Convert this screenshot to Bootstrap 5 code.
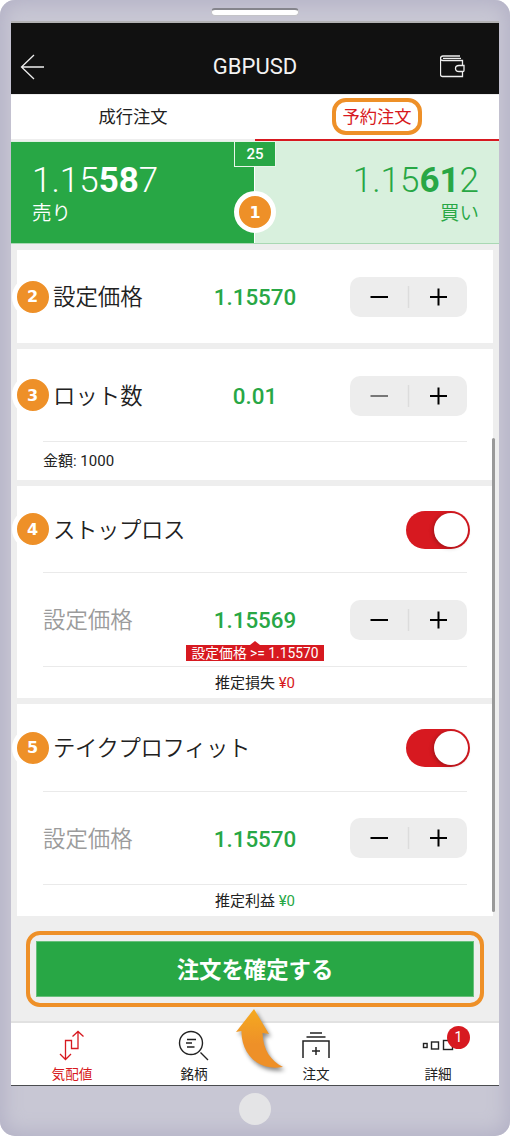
<!DOCTYPE html>
<html lang="ja">
<head>
<meta charset="utf-8">
<meta name="viewport" content="width=device-width, initial-scale=1">
<title>GBPUSD 予約注文</title>
<link href="https://cdn.jsdelivr.net/npm/bootstrap@5.3.0/dist/css/bootstrap.min.css" rel="stylesheet">
<style>
:root{--green:#28a745;--red:#d71920;--orange:#ee9028}
body{font-family:Roboto,"Noto Sans CJK JP",sans-serif;color:#212121;width:510px;height:1136px;overflow:hidden;background:#fff}
.phone{width:510px;height:1136px;border-radius:15px;background:#c8c7d4;box-shadow:inset 0 0 20px 3px #b2b0c5;padding:8px 11px 0}
.speaker{width:88px;height:8px;border-radius:4px;background:#fff;border:1px solid #c4c4c8;border-top:2px solid #85858c;margin-bottom:5px}
.screen{height:1065px;background:#eee;border-top:2px solid #b3b2b4;border-bottom:1px solid #4a4c4f}
.topbar{height:71px;background:#111;color:#f3f3f3;padding:15px 33px 0 9px;font-size:22px}
.tabs{height:47px;background:#fff;font-size:17.3px;border-top:1px solid #eee}
.tab-item{border-bottom:2px solid #eee;height:46px;padding-top:2px}
.tab-item.on{border-color:var(--red);color:var(--red)}
.ringed{border:4px solid var(--orange);border-radius:14px;width:90px;height:37px;margin-top:-3px;padding-top:3px}
.quotes{height:103px;border-top:1px solid #dff2e3;border-bottom:1px solid #a9d8b3}
.sell{background:var(--green);color:#fff;padding:20px 21px 0;border-right:1px solid #fff;width:244px}
.buy{background:#d8f0dd;color:var(--green);padding:20px 20px 0}
.price{font-size:35px;font-weight:300;line-height:38px}
.price b{font-weight:700}
.side{font-size:19.5px;line-height:26px;font-weight:350;padding-top:1px}
.spread{left:223px;top:-1px;width:42px;height:26px;background:var(--green);color:#fff;border:1px solid #e8f6ea;font-size:15px;font-weight:500}
.num{width:42px;height:42px;border-radius:50%;background:var(--orange);border:5px solid #fff;color:#fff;font:bold 16px "DejaVu Sans","Noto Sans",sans-serif}
.num.side-num{left:-5.5px;top:50%;margin-top:-21px}
.num.mid{left:223px;top:49px}
.panels{padding:6px 6px 0}
.panel{background:#fff;padding:0 26px;margin-bottom:6px}
.line{display:grid;grid-template-columns:1fr auto 1fr;align-items:center;position:relative;margin:0 -26px;padding:0 26px}
.name{font-size:22.4px;line-height:30px;white-space:nowrap;margin-top:1px;font-weight:350}
.name.in{padding-left:10px}
.name.kana{letter-spacing:-.4px}
.name.dim{color:#9b9b9b}
.val{font-size:22.4px;font-weight:500;color:var(--green);line-height:30px;padding-top:1px}
.stepper{width:117px;height:40px;border-radius:10px;background:#ededed;justify-self:end}
.rule{height:1px;background:#eaeaea}
.foot{font-size:15px;padding-top:1px}
.toggle{width:64px;height:38px;border-radius:19px;background:var(--red);padding:2px;justify-self:end;margin-right:-3px;margin-top:1px}
.knob{width:34px;height:34px;border-radius:50%;background:#fff;box-shadow:-1px 1px 4px #0004}
.tip{left:169px;top:72px;width:138px;height:16px;background:var(--red);color:#fff;font-size:13.8px;line-height:16px}
.tip::before{content:"";position:absolute;left:64px;top:-4px;border:5px solid transparent;border-top:0;border-bottom:4px solid var(--red)}
.scroll-thumb{right:4px;top:194px;width:3px;height:474px;border-radius:2px;background:#999}
.cta{margin:15px 15px 0;height:76px;border:4px solid var(--orange);border-radius:14px;padding:6px}
.cta .btn{background:var(--green);border:1px solid #68bf7b;color:#fff;font-size:22.4px;font-weight:700}
.dock{height:64px;background:#fff;border-top:2px solid #e1e1e1;margin-top:14px;font-size:13.6px}
.dock>div{width:122px;padding-top:5px}
.dock svg{display:block;height:36px;width:50px}
.dock span{line-height:20px}
.alert-dot{left:70px;top:3px;width:23px;height:23px;border-radius:50%;background:var(--red);color:#fff;font-size:14px}
.pointer{left:229px;top:1003px;filter:drop-shadow(2px 3px 2px #0007)}
.home{width:32px;height:32px;border-radius:50%;background:#e4e4e6;margin-top:7px}
</style>
</head>
<body>
<div class="phone position-relative">
  <div class="speaker mx-auto"></div>
  <div class="screen position-relative">
    <header class="topbar position-relative d-flex align-items-center justify-content-between">
      <svg width="26" height="28" viewBox="0 -1 26 28" fill="none" stroke="#eee" stroke-width="1.3"><path d="M24 14H1.500M14 2L1.500 14L14 26"/></svg>
      <div class="position-absolute start-0 end-0 text-center">GBPUSD</div>
      <svg width="26" height="24" viewBox="1 0 26 24" fill="none" stroke="#eee" stroke-width="1.300"><path d="M21 2H4Q1.500 2 1.500 4.500V20.500Q1.500 22.500 3.500 22.500H23.500V18M23.500 11V6.500H4Q1.500 6.500 1.500 4.500M4 4.300H22M25 11.500H20Q16.500 11.500 16.500 14.500T20 17.500H24Q25 17.500 25 16.500Z"/></svg>
    </header>
    <div class="tabs d-flex">
      <div class="tab-item w-50 d-flex align-items-center justify-content-center">成行注文</div>
      <div class="tab-item on w-50 d-flex align-items-center justify-content-center"><div class="ringed d-flex align-items-center justify-content-center">予約注文</div></div>
    </div>
    <div class="quotes position-relative d-flex">
      <div class="sell"><div class="price">1.15<b>58</b>7</div><div class="side">売り</div></div>
      <div class="buy flex-fill text-end"><div class="price">1.15<b>61</b>2</div><div class="side">買い</div></div>
      <div class="spread position-absolute d-flex align-items-center justify-content-center">25</div>
      <div class="num mid position-absolute d-flex align-items-center justify-content-center">1</div>
    </div>
    <main class="panels position-relative">
      <section class="panel">
        <div class="line" style="height:93px"><div class="num side-num position-absolute d-flex align-items-center justify-content-center">2</div><div class="name in">設定価格</div><div class="val">1.15570</div><div class="stepper"><svg width="117" height="40" stroke="#000" stroke-width="2"><path d="M20.500 20H38M80 20H97M88.500 11.500V28.500"/><path d="M58.500 9V31" stroke="#dcdcdc" stroke-width="1.500"/></svg></div></div>
      </section>
      <section class="panel">
        <div class="line" style="height:92px"><div class="num side-num position-absolute d-flex align-items-center justify-content-center">3</div><div class="name in">ロット数</div><div class="val">0.01</div><div class="stepper" style="margin-top:2px"><svg width="117" height="40" stroke="#000" stroke-width="2"><path d="M20.500 20H38" stroke="#777"/><path d="M80 20H97M88.500 11.500V28.500"/><path d="M58.500 9V31" stroke="#dcdcdc" stroke-width="1.500"/></svg></div></div>
        <div class="rule"></div>
        <div class="foot d-flex align-items-center" style="height:38px">金額: 1000</div>
      </section>
      <section class="panel">
        <div class="line" style="height:86px"><div class="num side-num position-absolute d-flex align-items-center justify-content-center">4</div><div class="name in kana">ストップロス</div><div></div><div class="toggle d-flex justify-content-end"><div class="knob"></div></div></div>
        <div class="rule"></div>
        <div class="line" style="height:93px"><div class="name dim">設定価格</div><div class="val">1.15569</div><div class="stepper"><svg width="117" height="40" stroke="#000" stroke-width="2"><path d="M20.500 20H38M80 20H97M88.500 11.500V28.500"/><path d="M58.500 9V31" stroke="#dcdcdc" stroke-width="1.500"/></svg></div><div class="tip position-absolute text-center text-nowrap">設定価格 &gt;= 1.15570</div></div>
        <div class="rule"></div>
        <div class="foot d-flex align-items-center justify-content-center" style="height:31px">推定損失&nbsp;<span style="color:var(--red)">¥0</span></div>
      </section>
      <section class="panel mb-0">
        <div class="line" style="height:87px"><div class="num side-num position-absolute d-flex align-items-center justify-content-center">5</div><div class="name in kana">テイクプロフィット</div><div></div><div class="toggle d-flex justify-content-end"><div class="knob"></div></div></div>
        <div class="rule"></div>
        <div class="line" style="height:92px"><div class="name dim">設定価格</div><div class="val">1.15570</div><div class="stepper"><svg width="117" height="40" stroke="#000" stroke-width="2"><path d="M20.500 20H38M80 20H97M88.500 11.500V28.500"/><path d="M58.500 9V31" stroke="#dcdcdc" stroke-width="1.500"/></svg></div></div>
        <div class="rule"></div>
        <div class="foot d-flex align-items-center justify-content-center" style="height:31px">推定利益&nbsp;<span style="color:var(--green)">¥0</span></div>
      </section>
      <div class="scroll-thumb position-absolute"></div>
    </main>
    <div class="cta"><button class="btn rounded-0 w-100 h-100 p-0 pt-1">注文を確定する</button></div>
    <nav class="dock d-flex">
      <div class="d-flex flex-column align-items-center" style="color:var(--red)"><svg viewBox="0 0 50 36" fill="none" stroke="#d71920" stroke-width="1.300"><path d="M18.500 31V12.500H24.500V20.500H31V4M13 26L18.500 31.500L24 26M25.500 8.500L31 3.500L36.500 8.500"/></svg><span>気配値</span></div>
      <div class="d-flex flex-column align-items-center"><svg viewBox="0 0 50 36" fill="none" stroke="#222" stroke-width="1.400"><circle cx="22" cy="15" r="11.500"/><path d="M31.500 24.500L39 32M18 11.500H27M17 15H23M18 19H25.500"/></svg><span>銘柄</span></div>
      <div class="d-flex flex-column align-items-center"><svg viewBox="0 0 50 36" fill="none" stroke="#222" stroke-width="1.500"><path d="M19 5H31M15.500 9H34.500M12 30V13H38V30M25 19V27M21 23H29"/></svg><span>注文</span></div>
      <div class="position-relative d-flex flex-column align-items-center"><svg viewBox="0 0 50 36" fill="none" stroke="#222" stroke-width="1.400"><rect x="10.500" y="15.500" width="3.600" height="4"/><rect x="18.500" y="14" width="7" height="7"/><rect x="30.500" y="12.500" width="9" height="9"/></svg><span>詳細</span><div class="alert-dot position-absolute d-flex align-items-center justify-content-center">1</div></div>
    </nav>
  </div>
  <div class="home mx-auto"></div>
  <svg class="pointer position-absolute" width="62" height="72" viewBox="229 1003 62 72"><defs><linearGradient id="amber" x1="0" y1="0" x2="0" y2="1"><stop offset="0" stop-color="#f5aa20"/><stop offset=".6" stop-color="#ee9028"/></linearGradient></defs><path fill="url(#amber)" d="M236 1032L254 1009L269 1034L262.500 1033C263 1050 271 1061 283 1067C257 1072 241 1052 241.500 1031Z"/></svg>
</div>
<script src="https://cdn.jsdelivr.net/npm/bootstrap@5.3.0/dist/js/bootstrap.bundle.min.js"></script>
</body>
</html>
